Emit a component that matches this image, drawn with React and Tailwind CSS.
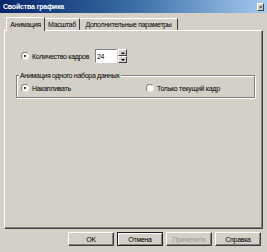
import React from "react";

const font = { fontFamily: '"Liberation Sans", Arial, sans-serif' };

const Radio = ({ checked }) => (
  <span className="relative inline-block w-[8px] h-[8px] rounded-full bg-white border border-t-[#808080] border-l-[#808080] border-r-[#e8e8e8] border-b-[#e8e8e8] shrink-0">
    {checked && <span className="absolute left-[2px] top-[2px] w-[2px] h-[2px] rounded-full bg-black" />}
  </span>
);

const Button = ({ children, primary, disabled }) => (
  <div
    className={
      "w-[46px] h-[14px] flex items-center justify-center bg-[#d4d0c8] border " +
      (primary
        ? "border-[#202020] shadow-[inset_1px_1px_0_#fff,inset_-1px_-1px_0_#808080]"
        : "border-t-white border-l-white border-r-[#404040] border-b-[#404040] shadow-[inset_-1px_-1px_0_#808080]") +
      (disabled ? " text-[#a09c94]" : " text-black")
    }
  >
    {children}
  </div>
);

export default function App() {
  return (
    <div className="w-[267px] h-[252px] bg-[#d4d0c8] flex flex-col text-[7px] tracking-[-0.3px] leading-none select-none overflow-hidden" style={font}>
      {/* Заголовок */}
      <div className="h-[13px] flex items-center justify-between bg-gradient-to-r from-[#0a246a] via-[#3a6ea5] to-[#a6caf0] pl-[3px] pr-[3px]">
        <span className="text-white font-bold text-[7px] tracking-[-0.2px]">Свойства графика</span>
        <span className="w-[7px] h-[8px] bg-[#d4d0c8] border border-t-white border-l-white border-r-[#404040] border-b-[#404040] flex items-center justify-center text-[6px] text-black">×</span>
      </div>

      <div className="flex flex-col pl-[4px] pt-[3px]">
        {/* Вкладки */}
        <div className="flex items-end pl-[2px] h-[14px] relative z-10">
          <div className="h-[14px] w-[39px] justify-center flex items-center bg-[#d4d0c8] border-l border-t border-white border-r border-r-[#404040] -mb-[1px] pb-[1px]">
            Анимация
          </div>
          <div className="h-[12px] w-[35px] justify-center flex items-center border-t border-white border-r border-r-[#404040]">
            Масштаб
          </div>
          <div className="h-[12px] w-[98px] justify-center flex items-center border-t border-white border-r border-r-[#404040]">
            Дополнительные параметры
          </div>
        </div>

        {/* Панель */}
        <div className="w-[259px] h-[199px] border border-t-white border-l-white border-r-[#404040] border-b-[#404040] shadow-[inset_-1px_-1px_0_#808080] flex flex-col">
          <div className="flex items-center pl-[16px] mt-[18px] h-[14px]">
            <Radio checked />
            <span className="ml-[3px] w-[63px] shrink-0">Количество кадров</span>
            <div className="w-[22px] h-[14px] bg-white border border-t-[#808080] border-l-[#808080] border-r-white border-b-white flex items-center pl-[1px]">
              24
            </div>
            <div className="flex flex-col ml-[1px] h-[14px]">
              <div className="w-[9px] h-[7px] border border-t-white border-l-white border-r-[#404040] border-b-[#404040] flex items-center justify-center">
                <span className="w-0 h-0 border-l-[2px] border-r-[2px] border-b-[2px] border-transparent border-b-black" />
              </div>
              <div className="w-[9px] h-[7px] border border-t-white border-l-white border-r-[#404040] border-b-[#404040] flex items-center justify-center">
                <span className="w-0 h-0 border-l-[2px] border-r-[2px] border-t-[2px] border-transparent border-t-black" />
              </div>
            </div>
          </div>

          {/* Группа */}
          <div className="relative ml-[11px] mt-[12px] w-[239px] h-[23px] border border-[#808080] shadow-[1px_1px_0_#fff,inset_1px_1px_0_#fff]">
            <span className="absolute left-[2px] -top-[4px] bg-[#d4d0c8] px-[1px]">Анимация одного набора данных</span>
            <div className="flex items-center h-full pt-[3px] pl-[4px]">
              <div className="flex items-center w-[125px] shrink-0">
                <Radio checked />
                <span className="ml-[3px]">Накапливать</span>
              </div>
              <div className="flex items-center">
                <Radio />
                <span className="ml-[3px]">Только текущий кадр</span>
              </div>
            </div>
          </div>
        </div>

        {/* Кнопки */}
        <div className="flex justify-end gap-[3px] mt-[3px] pr-[6px]">
          <Button>OK</Button>
          <Button primary>Отмена</Button>
          <Button disabled>Применить</Button>
          <Button>Справка</Button>
        </div>
      </div>
    </div>
  );
}
